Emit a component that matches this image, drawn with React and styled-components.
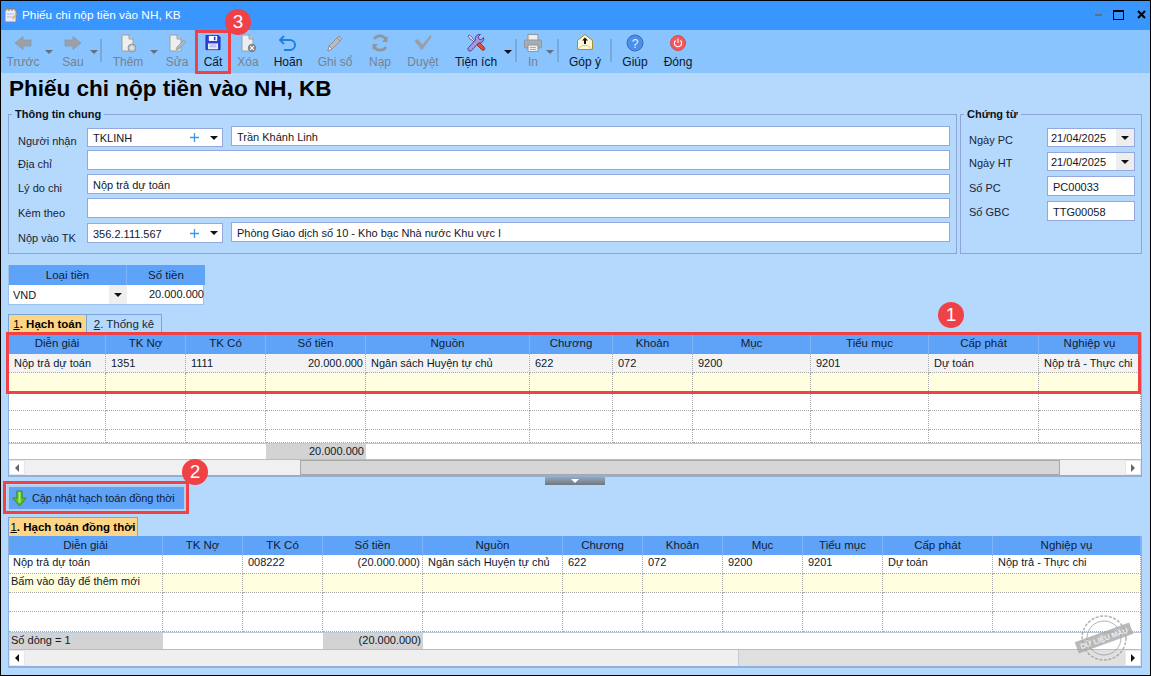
import React from "react";
import styled, { createGlobalStyle } from "styled-components";

const GlobalStyle = createGlobalStyle`
  html, body { margin: 0; padding: 0; background: #b5d9fd; }
  * { box-sizing: border-box; }
`;

const FONT = `"Liberation Sans", Arial, sans-serif`;

const Window = styled.div`
  position: relative;
  width: 1151px;
  height: 676px;
  display: flex;
  flex-direction: column;
  overflow: hidden;
  border: 1px solid #000;
  background: #b5d9fd;
  font-family: ${FONT};
  font-size: 11px;
  color: #10182a;
`;

const TitleBar = styled.header`
  height: 29px;
  flex: none;
  display: flex;
  align-items: center;
  padding: 0 4px 2px 2px;
  background: #3a96ff;
`;
const TitleText = styled.span`
  margin-left: 4px;
  color: #fff;
  font-size: 11.8px;
  flex: 1;
`;
const WinControls = styled.div`
  display: flex;
  align-items: center;
  color: #111;
`;
const MinBtn = styled.span`
  width: 7px;
  height: 2px;
  margin-right: 11px;
  margin-top: 1px;
  background: #666f7c;
`;
const MaxBtn = styled.span`
  width: 11px;
  height: 10px;
  margin-right: 13px;
  border: 1px solid #000;
  border-top-width: 2px;
`;

const Toolbar = styled.nav`
  height: 43px;
  flex: none;
  display: flex;
  align-items: flex-start;
  background: #8ac4ff;
`;
const ToolButton = styled.div`
  width: ${(p) => p.$w}px;
  margin-left: ${(p) => p.$gap || 0}px;
  flex: none;
  height: 43px;
  display: flex;
  flex-direction: column;
  align-items: center;
  padding-top: 3px;
  color: ${(p) => (p.$off ? "#76828f" : "#0c1626")};
  font-size: 12px;
  white-space: nowrap;
  svg { display: block; width: 20px; height: 20px; flex: none; }
`;
const ToolLabel = styled.span`
  margin-top: 2px;
  line-height: 14px;
`;
const ToolCaret = styled.span`
  width: 8px;
  flex: none;
  margin-left: ${(p) => p.$gap || 0}px;
  margin-right: -1px;
  margin-top: 20px;
  height: 0;
  border-left: 4px solid transparent;
  border-right: 4px solid transparent;
  border-top: 4px solid ${(p) => (p.$off ? "#66707c" : "#111")};
`;
const ToolSep = styled.span`
  width: 2px;
  height: 23px;
  flex: none;
  margin-top: 9px;
  margin-left: ${(p) => p.$gap || 0}px;
  background: #7aa8d8;
`;

const Main = styled.main`
  flex: 1;
  display: flex;
  flex-direction: column;
  min-height: 0;
  padding: 0 8px 0 7px;
`;
const PageTitle = styled.h1`
  margin: 0 0 0 1px;
  height: 34px;
  font-size: 22.5px;
  line-height: 32px;
  font-weight: 700;
  color: #000;
`;
const FormRow = styled.div`
  display: flex;
  gap: 3px;
  height: 147px;
  flex: none;
`;
const Group = styled.fieldset`
  margin: 0;
  padding: 5px 6px 0 ${(p) => p.$pl}px;
  width: ${(p) => p.$w}px;
  flex: none;
  border: 1px solid #8ca5d6;
  min-width: 0;
`;
const Legend = styled.legend`
  font-weight: 700;
  font-size: 11px;
  line-height: 14px;
  padding: 0 3px;
  margin-left: ${(p) => p.$l}px;
  color: #0b1220;
`;
const Line = styled.div`
  display: flex;
  align-items: flex-start;
  height: ${(p) => p.$h || 24}px;
`;
const FieldLabel = styled.label`
  width: ${(p) => p.$w}px;
  flex: none;
  margin-top: ${(p) => p.$t ?? 8}px;
  line-height: 14px;
  color: #1b2433;
`;
const TextBox = styled.div`
  width: ${(p) => (p.$w ? `${p.$w}px` : "auto")};
  flex: ${(p) => (p.$w ? "none" : 1)};
  height: ${(p) => p.$h || 20}px;
  margin-top: ${(p) => p.$t || 0}px;
  margin-left: ${(p) => p.$l || 0}px;
  border: 1px solid #95a8dd;
  background: #fff;
  padding-left: ${(p) => p.$pad ?? 5}px;
  line-height: 20px;
  color: #10182a;
  white-space: nowrap;
`;
const Combo = styled.div`
  width: ${(p) => p.$w}px;
  flex: none;
  height: ${(p) => p.$h || 20}px;
  margin-top: ${(p) => p.$t || 0}px;
  border: 1px solid #95a8dd;
  background: #fff;
  display: flex;
  align-items: center;
  padding-left: ${(p) => p.$pad ?? 5}px;
`;
const ComboValue = styled.span`
  flex: 1;
  white-space: nowrap;
  line-height: 18px;
  padding-top: 1px;
`;
const PlusMark = styled.svg`
  width: 9px;
  height: 9px;
  margin-right: 11px;
  flex: none;
`;
const DownCaret = styled.span`
  width: 0;
  height: 0;
  flex: none;
  margin-right: ${(p) => p.$r ?? 4}px;
  border-left: 4px solid transparent;
  border-right: 4px solid transparent;
  border-top: 4px solid #111;
`;
const DropSquare = styled.span`
  width: ${(p) => p.$w || 18}px;
  align-self: stretch;
  flex: none;
  background: #eeeeee;
  display: flex;
  align-items: center;
  justify-content: center;
`;

const Currency = styled.div`
  margin: 11px 0 0 0;
  width: 196px;
  flex: none;
  display: grid;
  grid-template-columns: 118px 78px;
  grid-template-rows: 20px 19px;
  border: 1px solid #9cc2ee;
  border-top: 0;
  background: #fff;
`;
const CurrencyHead = styled.div`
  background: #5fa3f8;
  text-align: center;
  line-height: 21px;
  font-size: 11.5px;
  color: #0f1c33;
  border-right: ${(p) => (p.$sep ? "1px solid #7db4fa" : "0")};
`;
const CurrencyCell = styled.div`
  display: flex;
  align-items: center;
  justify-content: ${(p) => (p.$right ? "flex-end" : "flex-start")};
  padding: ${(p) => (p.$right ? "0 1px 0 0" : "0 0 0 4px")};
  line-height: 17px;
  color: #10182a;
`;

const Tabs = styled.div`
  margin: ${(p) => p.$t}px 0 0 0;
  height: ${(p) => p.$h}px;
  flex: none;
  display: flex;
`;
const Tab = styled.div`
  width: ${(p) => p.$w}px;
  flex: none;
  display: flex;
  align-items: center;
  justify-content: center;
  white-space: nowrap;
  border: 1px solid #7ba4d8;
  border-bottom: 0;
  border-left-width: ${(p) => (p.$join ? 0 : 1)}px;
  background: ${(p) => (p.$active ? "#fed584" : "#b5d9fd")};
  font-weight: ${(p) => (p.$active ? 700 : 400)};
  font-size: 11.5px;
  color: ${(p) => (p.$active ? "#000" : "#1a2435")};
  u { font-weight: 400; }
`;

const GridBox = styled.section`
  width: 1134px;
  flex: none;
  display: flex;
  flex-direction: column;
  border-left: 1px solid #8fb0d8;
  border-right: 1px solid #8fb0d8;
  border-bottom: 2px solid #8fb0d8;
  background: #fff;
`;
const GridRow = styled.div`
  display: grid;
  grid-template-columns: ${(p) => p.$cols};
  height: ${(p) => p.$h}px;
  flex: none;
  background: ${(p) => p.$bg || "#fff"};
`;
const HeadCell = styled.div`
  background: #5fa3f8;
  border-right: 1px solid #7db4fa;
  text-align: center;
  font-size: 11.5px;
  line-height: ${(p) => p.$lh}px;
  color: #0f1c33;
  white-space: nowrap;
  overflow: hidden;
`;
const BodyCell = styled.div`
  border-right: 1px dotted #a9a9a9;
  border-bottom: 1px dotted #a9a9a9;
  text-align: ${(p) => (p.$right ? "right" : "left")};
  padding: ${(p) => (p.$right ? "0 2px 0 0" : `0 0 0 ${p.$pad ?? 5}px`)};
  line-height: ${(p) => p.$lh}px;
  color: #10182a;
  white-space: nowrap;
  overflow: ${(p) => (p.$spill ? "visible" : "hidden")};
`;
const FootCell = styled.div`
  border-top: 1px solid #b6cbe2;
  background: ${(p) => (p.$grey ? "#d3d3d3" : "#fff")};
  text-align: ${(p) => (p.$right ? "right" : "left")};
  padding: ${(p) => (p.$right ? "0 2px 0 0" : "0 0 0 2px")};
  line-height: 15px;
  white-space: nowrap;
  color: #10182a;
  grid-column: span ${(p) => p.$span || 1};
`;
const ScrollBar = styled.div`
  height: ${(p) => p.$h}px;
  flex: none;
  display: flex;
  background: ${(p) => p.$track};
  border-top: 1px solid #aebfd2;
`;
const ScrollBtn = styled.div`
  width: 16px;
  flex: none;
  background: #fff;
  border: 1px solid #e4e8ee;
  display: flex;
  align-items: center;
  justify-content: center;
`;
const ScrollGap = styled.div`
  width: ${(p) => (p.$w ? `${p.$w}px` : "auto")};
  flex: ${(p) => (p.$w ? "none" : 1)};
`;
const ScrollThumb = styled.div`
  width: ${(p) => p.$w}px;
  flex: none;
  background: ${(p) => p.$bg};
  border: ${(p) => (p.$line ? "1px solid #a8a8a8" : "0")};
  border-right: 1px solid ${(p) => (p.$line ? "#a8a8a8" : "#c3ccd6")};
`;
const ArrowLeft = styled.span`
  width: 0;
  height: 0;
  border-top: 4px solid transparent;
  border-bottom: 4px solid transparent;
  border-right: 4px solid ${(p) => p.$c};
`;
const ArrowRight = styled.span`
  width: 0;
  height: 0;
  border-top: 4px solid transparent;
  border-bottom: 4px solid transparent;
  border-left: 4px solid ${(p) => p.$c};
`;

const Splitter = styled.div`
  width: 60px;
  height: 8px;
  margin: 0 0 0 537px;
  flex: none;
  background: linear-gradient(#98a6bc, #70767f);
  display: flex;
  align-items: center;
  justify-content: center;
  &::after {
    content: "";
    border-left: 4px solid transparent;
    border-right: 4px solid transparent;
    border-top: 4px solid #fff;
  }
`;
const UpdateButton = styled.div`
  width: 179px;
  height: 26px;
  flex: none;
  margin-left: -1px;
  display: flex;
  align-items: center;
  gap: 5px;
  padding-left: 3px;
  background: #5fa3f8;
  border: 2px solid #b6cfe8;
  color: #0f1c33;
  font-size: 11px;
  letter-spacing: -0.1px;
  white-space: nowrap;
  svg { width: 15px; height: 19px; flex: none; }
`;

const Badge = styled.span`
  position: absolute;
  left: ${(p) => p.$x - 13}px;
  top: ${(p) => p.$y - 13}px;
  width: 26px;
  height: 26px;
  border-radius: 50%;
  background: #f04146;
  color: #fff;
  font-size: 19px;
  line-height: 26px;
  text-align: center;
`;
const Marker = styled.span`
  position: absolute;
  left: ${(p) => p.$x}px;
  top: ${(p) => p.$y}px;
  width: ${(p) => p.$w}px;
  height: ${(p) => p.$h}px;
  border: 3px solid #f04146;
  pointer-events: none;
`;
const Stamp = styled.svg`
  position: absolute;
  left: 1072px;
  top: 612px;
  width: 62px;
  height: 50px;
  pointer-events: none;
`;

const Ic = {
  back: (
    <svg viewBox="0 0 20 20"><path d="M2 10 10 3.500V7h8v6h-8v3.500z" fill="#9aa2a8" stroke="#8b9298" strokeWidth=".6"/></svg>
  ),
  next: (
    <svg viewBox="0 0 20 20"><path d="M18 10 10 3.500V7H2v6h8v3.500z" fill="#9aa2a8" stroke="#8b9298" strokeWidth=".6"/></svg>
  ),
  add: (
    <svg viewBox="0 0 20 20"><path d="M4 2h7l4 4v12H4z" fill="#eceff1" stroke="#9aa0a6"/><path d="M11 2v4h4" fill="#c9ced2" stroke="#9aa0a6"/><circle cx="14" cy="15" r="4" fill="#c2c6c9" stroke="#8f959a"/><path d="M14 13v4M12 15h4" stroke="#eef0f2" strokeWidth="1.2"/></svg>
  ),
  edit: (
    <svg viewBox="0 0 20 20"><path d="M3 2h7l4 4v12H3z" fill="#eceff1" stroke="#9aa0a6"/><path d="M10 2v4h4" fill="#c9ced2" stroke="#9aa0a6"/><path d="M9 17l1-3 7-7 2 2-7 7z" fill="#b2b7bb" stroke="#8f959a" strokeWidth=".7"/></svg>
  ),
  save: (
    <svg viewBox="-2 -1.500 24 24"><path d="M1.500 1.500h15l2 2v15h-17z" fill="#2d41d6" stroke="#1d2ea8"/><rect x="5" y="2" width="10" height="6" fill="#fff"/><rect x="11" y="3" width="2" height="4" fill="#2d41d6"/><rect x="4" y="11" width="12" height="7" fill="#e8ebfa"/><path d="M6 13h8M6 15h8" stroke="#9aa4e0"/></svg>
  ),
  del: (
    <svg viewBox="0 0 20 20"><path d="M4 2h7l4 4v12H4z" fill="#eceff1" stroke="#9aa0a6"/><path d="M11 2v4h4" fill="#c9ced2" stroke="#9aa0a6"/><circle cx="14" cy="15" r="4.200" fill="#80878d"/><path d="M12.200 13.200l3.600 3.600M15.800 13.200l-3.600 3.600" stroke="#fff" strokeWidth="1.200"/></svg>
  ),
  undo: (
    <svg viewBox="0 0 20 20"><path d="M6 3 2 7l4 4" fill="none" stroke="#1f7fe0" strokeWidth="1.800"/><path d="M3 7h9a5 5 0 0 1 0 10H6" fill="none" stroke="#1f7fe0" strokeWidth="2"/></svg>
  ),
  post: (
    <svg viewBox="0 0 20 20"><path d="M3 18l1-5L14 3l3 3L7 16z" fill="#b7bcc0" stroke="#8d9398"/><path d="M3 18l1-5 3 3z" fill="#eef0f1" stroke="#8d9398"/><path d="M12 5l3 3" stroke="#8d9398"/></svg>
  ),
  load: (
    <svg viewBox="0 0 20 20"><path d="M16 6.500A7 7 0 0 0 4 6" fill="none" stroke="#8f969c" strokeWidth="2.800"/><path d="M4 13.500A7 7 0 0 0 16 14" fill="none" stroke="#8f969c" strokeWidth="2.800"/><path d="M17.500 3v6h-5.500zM2.500 17v-6H8z" fill="#8f969c"/></svg>
  ),
  check: (
    <svg viewBox="0 0 20 20"><path d="M1.500 8l3-2 5 5.500L17.500 2l1 2-9 12.500H8z" fill="#98a0a6"/></svg>
  ),
  tools: (
    <svg viewBox="0 0 20 20"><path d="M3 2 2 3l2 3 2 1 8 8 1-1-8-8-1-2z" fill="#e6e2f5" stroke="#5a4a9a" strokeWidth=".8"/><path d="M17.500 4.500 15 7l-2-1-1-2 2.500-2.500A4.200 4.200 0 0 0 9.500 7L2.500 14.500a2 2 0 0 0 3 3L12.500 10a4.200 4.200 0 0 0 5-5.500z" fill="#a896dc" stroke="#4c3a8c" strokeWidth=".9"/><path d="M11 12l2.500-2.500 5 5a1.800 1.800 0 0 1-2.500 2.500z" fill="#e24a3b" stroke="#9c2018" strokeWidth=".8"/></svg>
  ),
  print: (
    <svg viewBox="0 0 20 20"><rect x="5" y="1.500" width="10" height="6" fill="#eceff1" stroke="#8f969c"/><rect x="1.500" y="7" width="17" height="8" rx="1" fill="#a6adb3" stroke="#8f969c"/><rect x="5" y="12" width="10" height="6.500" fill="#eceff1" stroke="#8f969c"/><path d="M7 14.500h6M7 16.500h6" stroke="#a6adb3"/></svg>
  ),
  mail: (
    <svg viewBox="0 0 20 20"><path d="M2.500 7.500 10 1.500l7.500 6v9h-15z" fill="#fff6d8" stroke="#a88c30" strokeWidth="1"/><path d="M2.500 16.500l5-4h5l5 4" fill="none" stroke="#e0c860"/><path d="M10 4.500l3 3H11V11H9V7.500H7z" fill="#111"/></svg>
  ),
  help: (
    <svg viewBox="0 0 20 20"><circle cx="10" cy="10" r="8" fill="#4b8fe8" stroke="#3570c0"/><text x="10" y="14.500" textAnchor="middle" fontFamily="Liberation Sans, sans-serif" fontSize="12" fill="#e8f1ff">?</text></svg>
  ),
  power: (
    <svg viewBox="0 0 20 20"><circle cx="10" cy="10" r="7.500" fill="#f0595c" stroke="#d94a4e"/><path d="M7.600 7.500a3.600 3.600 0 1 0 4.800 0" fill="none" stroke="#fff" strokeWidth="1.100"/><path d="M10 5.500v4.500" stroke="#fff" strokeWidth="1.100"/></svg>
  ),
};

const TOOLS = [
  { t: "b", label: "Trước", icon: Ic.back, w: 44, off: true },
  { t: "c", off: true },
  { t: "b", label: "Sau", icon: Ic.next, w: 34, gap: 4, off: true },
  { t: "c", off: true },
  { t: "s", gap: 3 },
  { t: "b", label: "Thêm", icon: Ic.add, w: 34, gap: 9, off: true },
  { t: "c", gap: 5, off: true },
  { t: "b", label: "Sửa", icon: Ic.edit, w: 34, gap: 3, off: true },
  { t: "b", label: "Cất", icon: Ic.save, w: 34, gap: 2 },
  { t: "b", label: "Xóa", icon: Ic.del, w: 34, gap: 1, off: true },
  { t: "b", label: "Hoãn", icon: Ic.undo, w: 36, gap: 5 },
  { t: "b", label: "Ghi sổ", icon: Ic.post, w: 40, gap: 9, off: true },
  { t: "b", label: "Nạp", icon: Ic.load, w: 34, gap: 8, off: true },
  { t: "b", label: "Duyệt", icon: Ic.check, w: 40, gap: 6, off: true },
  { t: "b", label: "Tiện ích", icon: Ic.tools, w: 52, gap: 7 },
  { t: "c", gap: 2 },
  { t: "s", gap: 4 },
  { t: "b", label: "In", icon: Ic.print, w: 26, gap: 3, off: true },
  { t: "c", off: true },
  { t: "s", gap: 4 },
  { t: "b", label: "Góp ý", icon: Ic.mail, w: 40, gap: 6 },
  { t: "s", gap: 5 },
  { t: "b", label: "Giúp", icon: Ic.help, w: 34, gap: 6 },
  { t: "b", label: "Đóng", icon: Ic.power, w: 40, gap: 6 },
];

const COLS_1 = "97px 80px 80px 100px 164px 83px 80px 118px 118px 110px 102px";
const COLS_2 = "154px 80px 80px 100px 140px 80px 80px 80px 80px 110px 148px";
const HEAD_1 = ["Diễn giải", "TK Nợ", "TK Có", "Số tiền", "Nguồn", "Chương", "Khoản", "Mục", "Tiểu mục", "Cấp phát", "Nghiệp vụ"];
const ROW_1 = ["Nộp trả dự toán", "1351", "1111", "20.000.000", "Ngân sách Huyện tự chủ", "622", "072", "9200", "9201", "Dự toán", "Nộp trả - Thực chi"];
const ROW_2 = ["Nộp trả dự toán", "", "008222", "(20.000.000)", "Ngân sách Huyện tự chủ", "622", "072", "9200", "9201", "Dự toán", "Nộp trả - Thực chi"];
const EMPTY = HEAD_1.map(() => "");

function Rows({ cols, values, h, bg, first, lh = 18 }) {
  return (
    <GridRow $cols={cols} $h={h} $bg={bg}>
      {values.map((v, i) => (
        <BodyCell key={i} $lh={lh} $right={i === 3} $pad={i === 0 ? first : undefined} $spill={i === 0}>
          {v}
        </BodyCell>
      ))}
    </GridRow>
  );
}

function Head({ cols, h }) {
  return (
    <GridRow $cols={cols} $h={h}>
      {HEAD_1.map((v) => (
        <HeadCell key={v} $lh={h}>{v}</HeadCell>
      ))}
    </GridRow>
  );
}

const Plus = () => (
  <PlusMark viewBox="0 0 9 9">
    <path d="M4.500 0v9M0 4.500h9" stroke="#3f97e8" strokeWidth="1.300" />
  </PlusMark>
);

export default function App() {
  return (
    <>
      <GlobalStyle />
      <Window>
        <TitleBar>
          <svg width="15" height="16" viewBox="0 0 15 16">
            <rect x="2" y="2" width="11" height="13" fill="#e9eefc" stroke="#7c7cc8" />
            <path d="M3 1v3M6 1v3M9 1v3M12 1v3" stroke="#9a7a3a" />
            <path d="M4 7h7M4 10h7" stroke="#a8b8e8" />
            <path d="M9 12l4-6 1 1-4 6z" fill="#e8b040" />
          </svg>
          <TitleText>Phiếu chi nộp tiền vào NH, KB</TitleText>
          <WinControls>
            <MinBtn />
            <MaxBtn />
            <svg width="9" height="9" viewBox="0 0 9 9">
              <path d="M1 1l7 7M8 1l-7 7" stroke="#000" strokeWidth="2" />
            </svg>
          </WinControls>
        </TitleBar>

        <Toolbar>
          {TOOLS.map((x, i) =>
            x.t === "b" ? (
              <ToolButton key={i} $w={x.w} $gap={x.gap} $off={x.off}>
                {x.icon}
                <ToolLabel>{x.label}</ToolLabel>
              </ToolButton>
            ) : x.t === "c" ? (
              <ToolCaret key={i} $gap={x.gap} $off={x.off} />
            ) : (
              <ToolSep key={i} $gap={x.gap} />
            )
          )}
        </Toolbar>

        <Main>
          <PageTitle>Phiếu chi nộp tiền vào NH, KB</PageTitle>
          <FormRow>
            <Group $w={949} $pl={9}>
              <Legend $l={-6}>Thông tin chung</Legend>
              <Line>
                <FieldLabel $w={69}>Người nhận</FieldLabel>
                <Combo $w={136} $h={19} $t={2}>
                  <ComboValue>TKLINH</ComboValue>
                  <Plus />
                  <DownCaret />
                </Combo>
                <TextBox $l={8}>Trần Khánh Linh</TextBox>
              </Line>
              <Line>
                <FieldLabel $w={69} $t={7}>Địa chỉ</FieldLabel>
                <TextBox />
              </Line>
              <Line>
                <FieldLabel $w={69} $t={7}>Lý do chi</FieldLabel>
                <TextBox>Nộp trả dự toán</TextBox>
              </Line>
              <Line>
                <FieldLabel $w={69} $t={8}>Kèm theo</FieldLabel>
                <TextBox />
              </Line>
              <Line>
                <FieldLabel $w={69} $t={9}>Nộp vào TK</FieldLabel>
                <Combo $w={136} $t={1}>
                  <ComboValue>356.2.111.567</ComboValue>
                  <Plus />
                  <DownCaret />
                </Combo>
                <TextBox $l={8}>Phòng Giao dịch số 10 - Kho bạc Nhà nước Khu vực I</TextBox>
              </Line>
            </Group>
            <Group $w={182} $pl={8}>
              <Legend $l={-5}>Chứng từ</Legend>
              <Line>
                <FieldLabel $w={78} $t={7}>Ngày PC</FieldLabel>
                <Combo $w={88} $h={19} $t={2} $pad={3}>
                  <ComboValue>21/04/2025</ComboValue>
                  <DropSquare><DownCaret $r={0} /></DropSquare>
                </Combo>
              </Line>
              <Line>
                <FieldLabel $w={78} $t={6}>Ngày HT</FieldLabel>
                <Combo $w={88} $h={19} $t={2} $pad={3}>
                  <ComboValue>21/04/2025</ComboValue>
                  <DropSquare><DownCaret $r={0} /></DropSquare>
                </Combo>
              </Line>
              <Line $h={25}>
                <FieldLabel $w={78} $t={7}>Số PC</FieldLabel>
                <TextBox $w={88} $t={2}>PC00033</TextBox>
              </Line>
              <Line>
                <FieldLabel $w={78} $t={6}>Số GBC</FieldLabel>
                <TextBox $w={88} $t={2}>TTG00058</TextBox>
              </Line>
            </Group>
          </FormRow>

          <Currency>
            <CurrencyHead $sep>Loại tiền</CurrencyHead>
            <CurrencyHead>Số tiền</CurrencyHead>
            <CurrencyCell>
              <ComboValue>VND</ComboValue>
              <DropSquare><DownCaret $r={0} /></DropSquare>
            </CurrencyCell>
            <CurrencyCell $right>20.000.000</CurrencyCell>
          </Currency>

          <Tabs $t={9} $h={19}>
            <Tab $w={79} $active><u>1</u>. Hạch toán</Tab>
            <Tab $w={75} $join><u>2</u>. Thống kê</Tab>
          </Tabs>

          <GridBox>
            <Head cols={COLS_1} h={21} />
            <Rows cols={COLS_1} values={ROW_1} h={19} bg="#f3f3f3" />
            <Rows cols={COLS_1} values={EMPTY} h={20} bg="#ffffe0" />
            <Rows cols={COLS_1} values={EMPTY} h={18} />
            <Rows cols={COLS_1} values={EMPTY} h={19} />
            <Rows cols={COLS_1} values={EMPTY} h={13} />
            <GridRow $cols={COLS_1} $h={16}>
              <FootCell $span={3} />
              <FootCell $grey $right>20.000.000</FootCell>
              <FootCell $span={7} />
            </GridRow>
            <ScrollBar $h={16} $track="#f0f0f0">
              <ScrollBtn><ArrowLeft $c="#666" /></ScrollBtn>
              <ScrollGap $w={275} />
              <ScrollThumb $w={760} $bg="#d6d6d6" $line />
              <ScrollGap />
              <ScrollBtn><ArrowRight $c="#666" /></ScrollBtn>
            </ScrollBar>
          </GridBox>

          <Splitter />
          <UpdateButton>
            <svg viewBox="0 0 17 19">
              <path d="M5.500 1h6v8H16l-7.500 9L1 9h4.500z" fill="#62c027" stroke="#2f8a18" />
              <path d="M8.500 2v12" stroke="#b8ec80" strokeWidth="2" />
            </svg>
            Cập nhật hạch toán đồng thời
          </UpdateButton>

          <Tabs $t={6} $h={19}>
            <Tab $w={130} $active><u>1</u>. Hạch toán đồng thời</Tab>
          </Tabs>

          <GridBox>
            <Head cols={COLS_2} h={19} />
            <Rows cols={COLS_2} values={ROW_2} h={19} first={4} lh={15} />
            <Rows cols={COLS_2} values={["Bấm vào đây để thêm mới", ...EMPTY.slice(1)]} h={19} bg="#ffffe0" first={2} lh={15} />
            <Rows cols={COLS_2} values={EMPTY} h={19} />
            <Rows cols={COLS_2} values={EMPTY} h={20} />
            <GridRow $cols={COLS_2} $h={17}>
              <FootCell $grey>Số dòng = 1</FootCell>
              <FootCell $span={2} />
              <FootCell $grey $right>(20.000.000)</FootCell>
              <FootCell $span={7} />
            </GridRow>
            <ScrollBar $h={17} $track="#e0e0e0">
              <ScrollBtn><ArrowLeft $c="#111" /></ScrollBtn>
              <ScrollThumb $w={714} $bg="#efefef" />
              <ScrollGap />
              <ScrollBtn><ArrowRight $c="#111" /></ScrollBtn>
            </ScrollBar>
          </GridBox>
        </Main>

        <Marker $x={194} $y={29} $w={36} $h={44} />
        <Marker $x={5} $y={331} $w={1135} $h={62} />
        <Marker $x={2} $y={480} $w={186} $h={33} />
        <Badge $x={237} $y={21}>3</Badge>
        <Badge $x={950} $y={314}>1</Badge>
        <Badge $x={194} $y={471}>2</Badge>

        <Stamp viewBox="0 0 62 50">
          <g fill="none" stroke="#9a9a9a" opacity=".75">
            <circle cx="31" cy="25" r="22" strokeWidth="1.500" strokeDasharray="3 1.500" />
            <circle cx="31" cy="25" r="17" strokeWidth="1" />
          </g>
          <g transform="rotate(-20 31 25)">
            <rect x="2" y="19" width="58" height="12" fill="#a8a8a8" opacity=".8" />
            <text x="31" y="28" textAnchor="middle" fontSize="7.500" fontWeight="700" fontFamily="Liberation Sans, sans-serif" fill="#eee">DỮ LIỆU MẪU</text>
          </g>
        </Stamp>
      </Window>
    </>
  );
}
